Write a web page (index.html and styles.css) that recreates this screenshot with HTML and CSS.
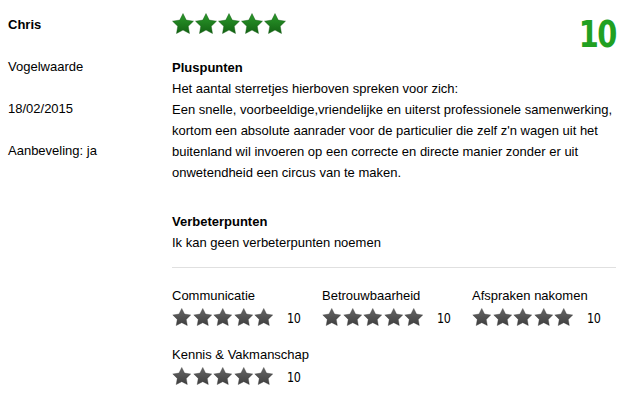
FILE: index.html
```html
<!DOCTYPE html>
<html lang="nl">
<head>
<meta charset="utf-8">
<title>Review</title>
<link rel="stylesheet" href="styles.css">
</head>
<body>
<svg class="defs" width="0" height="0" aria-hidden="true">
  <defs>
    <linearGradient id="gGreen" x1="0" y1="0" x2="0" y2="1">
      <stop offset="0" stop-color="#2b9a2b"/>
      <stop offset="1" stop-color="#136313"/>
    </linearGradient>
    <linearGradient id="gGray" x1="0" y1="0" x2="0" y2="1">
      <stop offset="0" stop-color="#666"/>
      <stop offset="1" stop-color="#3f3f3f"/>
    </linearGradient>
    <symbol id="star" viewBox="1.5 1.5 21 20">
      <path d="M12 2l3.09 6.26L22 9.27l-5 4.87 1.18 6.88L12 17.77l-6.18 3.25L7 14.14 2 9.27l6.91-1.01L12 2z"/>
    </symbol>
  </defs>
</svg>
<div class="review">
  <aside class="meta">
    <div class="name">Chris</div>
    <div>Vogelwaarde</div>
    <div>18/02/2015</div>
    <div>Aanbeveling: ja</div>
  </aside>
  <main class="content">
    <div class="head">
      <div class="stars big">
        <svg><use href="#star"/></svg><svg><use href="#star"/></svg><svg><use href="#star"/></svg><svg><use href="#star"/></svg><svg><use href="#star"/></svg>
      </div>
      <div class="score">10</div>
    </div>
    <section class="block">
      <h3>Pluspunten</h3>
      <p>Het aantal sterretjes hierboven spreken voor zich:<br>Een snelle, voorbeeldige,vriendelijke en uiterst professionele samenwerking, kortom een absolute aanrader voor de particulier die zelf z'n wagen uit het buitenland wil invoeren op een correcte en directe manier zonder er uit onwetendheid een circus van te maken.</p>
    </section>
    <section class="block second">
      <h3>Verbeterpunten</h3>
      <p>Ik kan geen verbeterpunten noemen</p>
    </section>
    <div class="ratings">
      <div class="rating">
        <div class="label">Communicatie</div>
        <div class="row"><div class="stars small"><svg><use href="#star"/></svg><svg><use href="#star"/></svg><svg><use href="#star"/></svg><svg><use href="#star"/></svg><svg><use href="#star"/></svg></div><span class="num">10</span></div>
      </div>
      <div class="rating">
        <div class="label">Betrouwbaarheid</div>
        <div class="row"><div class="stars small"><svg><use href="#star"/></svg><svg><use href="#star"/></svg><svg><use href="#star"/></svg><svg><use href="#star"/></svg><svg><use href="#star"/></svg></div><span class="num">10</span></div>
      </div>
      <div class="rating">
        <div class="label">Afspraken nakomen</div>
        <div class="row"><div class="stars small"><svg><use href="#star"/></svg><svg><use href="#star"/></svg><svg><use href="#star"/></svg><svg><use href="#star"/></svg><svg><use href="#star"/></svg></div><span class="num">10</span></div>
      </div>
      <div class="rating">
        <div class="label">Kennis &amp; Vakmanschap</div>
        <div class="row"><div class="stars small"><svg><use href="#star"/></svg><svg><use href="#star"/></svg><svg><use href="#star"/></svg><svg><use href="#star"/></svg><svg><use href="#star"/></svg></div><span class="num">10</span></div>
      </div>
    </div>
  </main>
</div>
</body>
</html>
```
FILE: styles.css
```css
html, body {
  background: #fff;
}
body {
  margin: 8px;
  font-family: "Liberation Sans", Arial, sans-serif;
  font-size: 13px;
  color: #000;
}
.defs {
  display: block;
  width: 0;
  height: 0;
  overflow: hidden;
}
.review {
  display: grid;
  grid-template-columns: 164px 444px;
}
.meta {
  display: flex;
  flex-direction: column;
  gap: 21px;
  padding-top: 6px;
  line-height: 21px;
}
.name {
  font-weight: bold;
}
.head {
  display: flex;
  justify-content: space-between;
  align-items: flex-start;
  height: 49px;
}
.stars {
  display: flex;
}
.stars svg {
  display: block;
}
.stars.big {
  margin-top: 5px;
  gap: 1px;
}
.stars.big svg {
  width: 22px;
  height: 21px;
  fill: url(#gGreen);
  stroke: #0e560e;
  stroke-width: 0.4;
}
.score {
  margin-top: 7px;
  font-family: "DejaVu Sans", "Liberation Sans", sans-serif;
  font-weight: bold;
  font-size: 38px;
  line-height: 38px;
  color: #21a021;
  letter-spacing: -2px;
  transform: scaleX(0.76);
  transform-origin: right center;
}
.block h3 {
  margin: 0;
  font-size: 13px;
  font-weight: bold;
  line-height: 21px;
}
.block p {
  margin: 0;
  line-height: 21px;
}
.block.second {
  margin-top: 28px;
  padding-bottom: 14px;
  border-bottom: 1px solid #e0e0e0;
}
.ratings {
  display: grid;
  grid-template-columns: repeat(3, 150px);
  row-gap: 20px;
  padding-top: 20px;
}
.label {
  line-height: 15px;
}
.row {
  display: flex;
  align-items: center;
  margin-top: 4px;
  gap: 13px;
}
.stars.small {
  gap: 1px;
}
.stars.small svg {
  width: 19.5px;
  height: 18px;
  fill: url(#gGray);
  stroke: #3a3a3a;
  stroke-width: 0.4;
}
.num {
  font-family: "DejaVu Sans", "Liberation Sans", sans-serif;
  font-size: 14px;
  line-height: 18px;
  padding-top: 2px;
  letter-spacing: -0.5px;
  transform: scaleX(0.8);
  transform-origin: left center;
}
```
